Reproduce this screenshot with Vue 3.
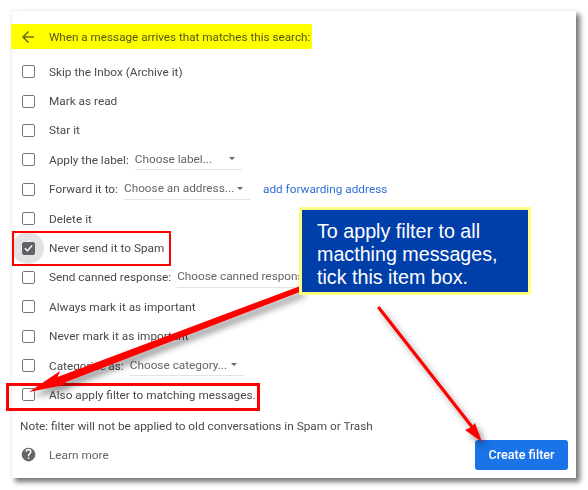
<template>
  <div class="page">
    <div class="card">
      <div class="search-head">
        <svg class="back" width="16" height="16" viewBox="0 0 16 16">
          <path d="M14 8H3.500M8.500 2.500 3 8l5.500 5.500" fill="none" stroke="#6d6d10" stroke-width="1.500" />
        </svg>
        <span>When a message arrives that matches this search:</span>
      </div>

      <div class="rows">
        <div v-for="row in rows" :key="row.label" class="row">
          <span class="box-wrap" :class="{ ripple: row.checked }">
            <span class="box" :class="{ checked: row.checked }">
              <svg v-if="row.checked" width="12" height="12" viewBox="0 0 12 12">
                <path d="M2 6.200 4.800 9 10 3.200" fill="none" stroke="#fff" stroke-width="1.500" />
              </svg>
            </span>
          </span>
          <span class="label">{{ row.label }}</span>
          <span v-if="row.select" class="select" :style="{ width: row.width + 'px' }">
            <span class="select-text">{{ row.select }}</span>
            <span v-if="row.caret" class="caret"></span>
          </span>
          <a v-if="row.link" class="link">{{ row.link }}</a>
        </div>
      </div>

      <div class="note">Note: filter will not be applied to old conversations in Spam or Trash</div>

      <div class="foot">
        <svg class="help" width="15" height="15" viewBox="0 0 24 24">
          <path fill="#666" d="M12 1a11 11 0 1 0 0 22 11 11 0 0 0 0-22zm1.200 18h-2.400v-2.400h2.400V19zm2.500-8.600-1.100 1.100c-.9.9-1.400 1.600-1.400 3.300h-2.400v-.6c0-1.300.5-2.500 1.400-3.400l1.500-1.500c.4-.4.7-1 .7-1.700a2.400 2.400 0 0 0-4.800 0H7.200a4.800 4.800 0 0 1 9.600 0c0 1.100-.4 2-1.100 2.800z" />
        </svg>
        <span class="learn">Learn more</span>
        <button class="create">Create filter</button>
      </div>

      <div class="mark mark-spam"></div>
      <div class="mark mark-apply"></div>
    </div>

    <svg class="arrows" width="588" height="490" viewBox="0 0 588 490">
      <g fill="#f00" class="arrow-shadow">
        <path d="M299 286.500 301 291.500 66 382 64 385 29 392 60 371 57.500 377z" />
        <path d="M377 308 379.500 306 473 425.500 475 423 482 442 465 430 470.500 427.500z" />
      </g>
    </svg>

    <div class="callout">To apply filter to all macthing messages, tick this item box.</div>
  </div>
</template>

<script setup>
const rows = [
  { label: 'Skip the Inbox (Archive it)' },
  { label: 'Mark as read' },
  { label: 'Star it' },
  { label: 'Apply the label:', select: 'Choose label...', width: 107, caret: true },
  { label: 'Forward it to:', select: 'Choose an address...', width: 126, caret: true, link: 'add forwarding address' },
  { label: 'Delete it' },
  { label: 'Never send it to Spam', checked: true },
  { label: 'Send canned response:', select: 'Choose canned response...', width: 150 },
  { label: 'Always mark it as important' },
  { label: 'Never mark it as important' },
  { label: 'Categorize as:', select: 'Choose category...', width: 114, caret: true },
  { label: 'Also apply filter to matching messages.' }
]
</script>

<style>
body {
  background: #fff;
}
</style>

<style scoped>
.page {
  position: relative;
  width: 588px;
  height: 490px;
  overflow: hidden;
  background: #fff;
  font-family: Roboto, "Liberation Sans", sans-serif;
  color: #4a4a4a;
}

.card {
  position: relative;
  box-sizing: border-box;
  width: 565px;
  height: 468px;
  margin: 10px 0 0 11px;
  padding-top: 13px;
  background: #fff;
  border-top: 1px solid #f1f1f1;
  border-left: 1px solid #f1f1f1;
  box-shadow: 4px 4px 5px #777;
}

.search-head {
  display: flex;
  align-items: center;
  width: 301px;
  height: 25px;
  margin-left: -1px;
  background: #ff0;
  color: #55550f;
  font-size: 11.700px;
  white-space: nowrap;
}

.back {
  margin: 0 13px 0 9px;
  flex: none;
}

.search-head,
.row,
.note,
.foot {
  filter: blur(0.3px);
}

.rows {
  margin-top: 8px;
}

.row {
  display: flex;
  align-items: center;
  height: 29.400px;
  padding-left: 9px;
  font-size: 11.800px;
  white-space: nowrap;
}

.box-wrap {
  display: flex;
  align-items: center;
  justify-content: center;
  flex: none;
  width: 14px;
  height: 14px;
  margin-right: 14px;
  border-radius: 50%;
}

.box-wrap.ripple {
  box-shadow: 0 0 0 9px #e2e2e2;
}

.box {
  display: flex;
  align-items: center;
  justify-content: center;
  box-sizing: border-box;
  width: 13px;
  height: 13px;
  border: 1.500px solid #777;
  border-radius: 2px;
}

.box.checked {
  background: #5f6368;
  border-color: #5f6368;
}

.select {
  display: flex;
  align-items: center;
  box-sizing: border-box;
  height: 21px;
  margin-left: 6px;
  padding-bottom: 1px;
  border-bottom: 1px solid #e2e2e2;
  color: #666;
  overflow: hidden;
}

.select-text {
  flex: 1;
}

.caret {
  width: 0;
  height: 0;
  margin-right: 7px;
  border-left: 3.500px solid transparent;
  border-right: 3.500px solid transparent;
  border-top: 3.500px solid #666;
}

.link {
  margin-left: 13px;
  color: #2f6fd6;
}

.note {
  margin: 9px 0 0 8px;
  font-size: 11.800px;
}

.foot {
  display: flex;
  align-items: center;
  height: 30px;
  margin-top: 7px;
  padding: 0 8px 0 9px;
  font-size: 11.800px;
}

.help {
  flex: none;
}

.learn {
  margin-left: 13px;
  color: #666;
}

.create {
  margin-left: auto;
  width: 93px;
  height: 30px;
  border: 0;
  border-radius: 3px;
  background: #1a73e8;
  color: #fff;
  font-family: Roboto, "Liberation Sans", sans-serif;
  font-size: 12.600px;
  font-weight: 500;
}

.mark {
  position: absolute;
  box-sizing: border-box;
  border: 2px solid #f00;
}

.mark-spam {
  left: 0;
  top: 220px;
  width: 159px;
  height: 35px;
}

.mark-apply {
  left: -6px;
  top: 372px;
  width: 254px;
  height: 28px;
  border-width: 3px;
}

.arrows {
  position: absolute;
  left: 0;
  top: 0;
  pointer-events: none;
}

.arrow-shadow {
  filter: drop-shadow(4px 5px 3px rgba(0, 0, 0, 0.400));
}

.callout {
  position: absolute;
  left: 299px;
  top: 207px;
  box-sizing: border-box;
  width: 232px;
  height: 88px;
  padding: 10px 10px 0 15px;
  border: 3px solid #ffff80;
  background: #003eaa;
  color: #fff;
  font-family: "Liberation Sans", Arial, sans-serif;
  font-size: 19.700px;
  line-height: 23px;
}
</style>
